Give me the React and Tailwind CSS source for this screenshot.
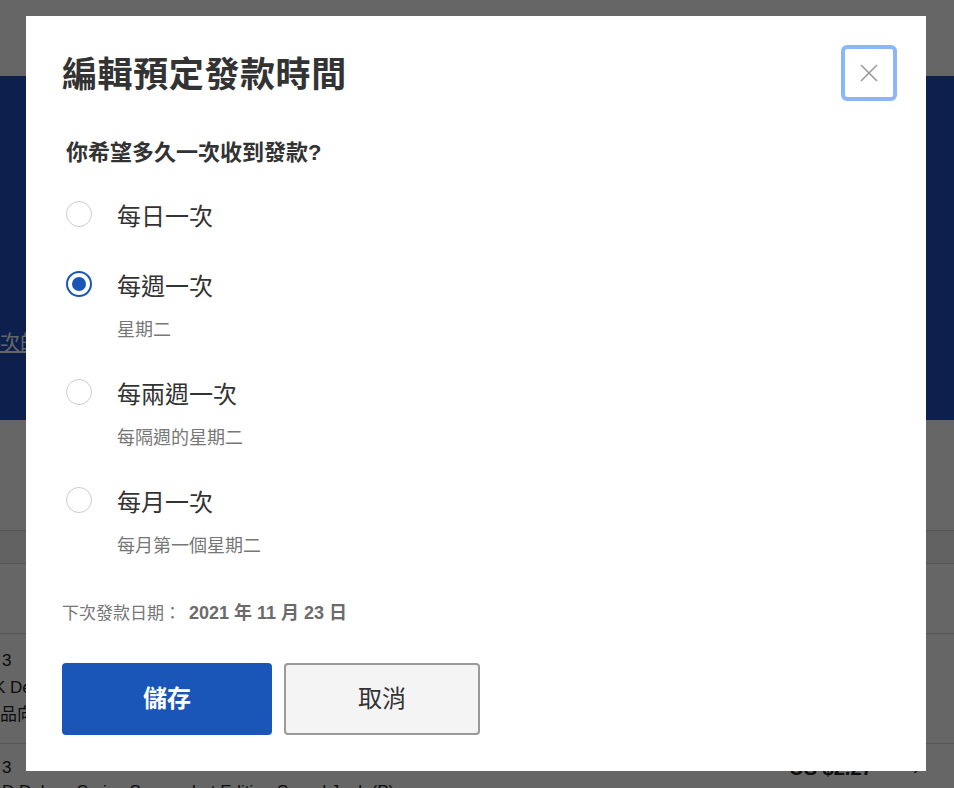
import React, { useState } from "react";

const FONT = { fontFamily: '"Liberation Sans", "Noto Sans CJK TC", sans-serif' };

const options = [
  { id: "daily", label: "每日一次", sub: null },
  { id: "weekly", label: "每週一次", sub: "星期二" },
  { id: "biweekly", label: "每兩週一次", sub: "每隔週的星期二" },
  { id: "monthly", label: "每月一次", sub: "每月第一個星期二" },
];

function Radio({ checked }) {
  if (checked) {
    return (
      <span className="w-[26px] h-[26px] shrink-0 rounded-full border-2 border-[#1a55b8] flex items-center justify-center">
        <span className="w-[14px] h-[14px] rounded-full bg-[#1a55b8]" />
      </span>
    );
  }
  return <span className="w-[26px] h-[26px] shrink-0 rounded-full border-[1.5px] border-[#cbcbcb] bg-white" />;
}

function BackgroundPage() {
  return (
    <div className="min-h-screen bg-white text-[#222]">
      <div className="h-[76px] bg-white" />
      <div className="h-[344px] bg-[#1e4ec0] pt-[255px]">
        <span className="text-white text-[20px] leading-[24px] underline">次的發款</span>
      </div>
      <div className="h-[111px] bg-white border-b border-[#d9d9d9]" />
      <div className="h-[33px] bg-[#f6f6f6] border-b border-[#d9d9d9]" />
      <div className="h-[70px] bg-white border-b border-[#d9d9d9]" />
      <div className="h-[110px] bg-white border-b border-[#d9d9d9] pt-[13px] pl-[2px] text-[17px] leading-[27px]">
        <div>3</div>
        <div className="ml-[-8px]">K De</div>
        <div className="ml-[-2px]">品向</div>
      </div>
      <div className="bg-white pt-[12px] pl-[2px] pr-[34px] text-[17px] leading-[24px]">
        <div className="flex justify-between items-center">
          <span>3</span>
          <div className="flex items-center gap-[40px]">
            <span className="font-bold text-[20px]">US $2.27</span>
            <span className="text-[22px] text-[#333]">›</span>
          </div>
        </div>
        <div>D Deluxe Series Screenshot Edition Sound Junk (P)</div>
      </div>
    </div>
  );
}

export default function App() {
  const [selected, setSelected] = useState("weekly");

  return (
    <div style={FONT} className="relative">
      <BackgroundPage />
      <div className="fixed inset-0 bg-black/60 pl-[26px] pt-[16px]">
        <div className="w-[900px] bg-white px-9 pt-[29px] pb-9">
          <div className="flex justify-between items-start">
            <h2 className="h-[56px] flex items-center pt-[4px] text-[35px] font-bold text-[#333] tracking-[0.6px]">
              編輯預定發款時間
            </h2>
            <button className="w-14 h-14 mr-[-7px] rounded-[6px] border-[4px] border-[#8cb5fa] bg-white flex items-center justify-center">
              <svg width="20" height="20" viewBox="0 0 20 20" fill="none" stroke="#9a9a9a" strokeWidth="1.6">
                <path d="M2 2 L18 18 M18 2 L2 18" />
              </svg>
            </button>
          </div>

          <p className="mt-[37px] pl-[4px] text-[22px] leading-[30px] font-bold text-[#333]">你希望多久一次收到發款?</p>

          <div className="mt-[33px] flex flex-col gap-[37px]">
            {options.map((o, i) => (
              <label
                key={o.id}
                className={`flex items-start gap-[25px] pl-[4px] cursor-pointer ${i === 1 ? "mt-[1px]" : ""}`}
                onClick={() => setSelected(o.id)}
              >
                <Radio checked={selected === o.id} />
                <div>
                  <div className="text-[24px] leading-[32px] text-[#333]">{o.label}</div>
                  {o.sub && <div className="mt-[15px] text-[18px] leading-[24px] text-[#777]">{o.sub}</div>}
                </div>
              </label>
            ))}
          </div>

          <p className="mt-[43px] text-[17px] leading-[24px] text-[#777]">
            下次發款日期：<span className="font-bold text-[18px] text-[#6b6b6b] ml-[8px]">2021 年 11 月 23 日</span>
          </p>

          <div className="mt-[37px] flex gap-[12px]">
            <button className="w-[210px] h-[72px] rounded-[4px] bg-[#1a55b8] text-white text-[24px] font-bold">儲存</button>
            <button className="w-[196px] h-[72px] rounded-[4px] bg-[#f5f4f5] border-2 border-[#9a9a9a] text-[#333] text-[24px]">
              取消
            </button>
          </div>
        </div>
      </div>
    </div>
  );
}
